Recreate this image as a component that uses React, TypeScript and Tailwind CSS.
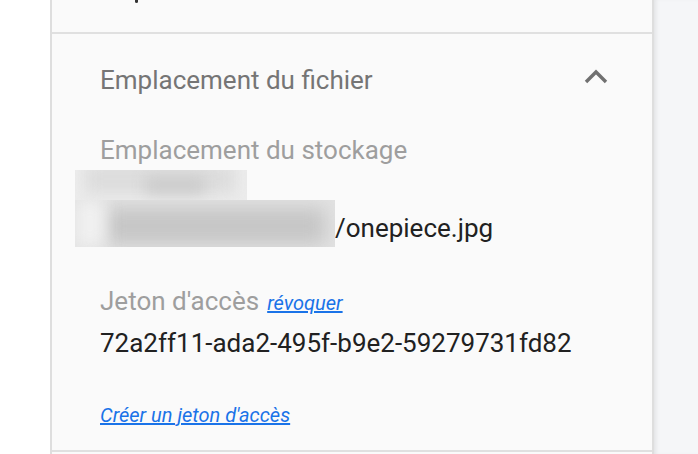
export default function App() {
  return (
    <div className="w-[698px] h-[454px] overflow-hidden flex bg-white" style={{ fontFamily: 'Roboto, "Liberation Sans", sans-serif' }}>
      {/* Left gutter */}
      <div className="w-[50px] shrink-0 bg-white" />

      {/* Panel */}
      <div className="w-[604px] shrink-0 bg-[#fafafa] border-x-2 border-[#dedede] flex flex-col">
        {/* Previous section tail */}
        <div className="h-[34px] shrink-0 relative border-b-2 border-[#e0e0e0]">
          <span className="absolute left-[83px] -top-[2px] w-[3px] h-[5px] bg-[#333] rounded-b-sm" />
        </div>

        {/* File location section */}
        <div className="flex-1 flex flex-col pl-[48px] pr-[44px] border-b-2 border-[#e0e0e0]">
          <div className="h-[92px] shrink-0 flex items-center justify-between">
            <span className="text-[26px] leading-[30px] text-[#757575]">Emplacement du fichier</span>
            <svg width="24" height="16" viewBox="0 0 24 16" className="mt-[-6px]">
              <polyline points="2,13 12,3 22,13" fill="none" stroke="#707070" strokeWidth="3.4" />
            </svg>
          </div>

          <div className="mt-[9px] text-[26px] leading-[30px] text-[#9e9e9e]">Emplacement du stockage</div>

          <div className="mt-[5px] h-[77px] flex items-end -ml-[25px]">
            {/* blurred path */}
            <div className="w-[260px] h-[77px] flex flex-col">
              <div className="w-[172px] h-[30px] relative overflow-hidden bg-[#ececec]">
                <div className="absolute left-[10px] top-[-6px] w-[150px] h-[30px] bg-[#dcdcdc] blur-[8px]" />
                <div className="absolute left-[70px] top-[6px] w-[60px] h-[18px] bg-[#cccccc] blur-[7px]" />
              </div>
              <div className="flex-1 relative overflow-hidden bg-[#e2e2e2]">
                <div className="absolute left-[30px] top-[8px] w-[220px] h-[36px] bg-[#c6c6c6] blur-[9px]" />
                <div className="absolute left-[0px] top-[0px] w-[30px] h-[47px] bg-[#f0f0f0] blur-[8px]" />
              </div>
            </div>
            <span className="text-[26px] leading-[30px] text-[#212121] pb-[4px]">/onepiece.jpg</span>
          </div>

          <div className="mt-[39px] flex items-baseline gap-[8px]">
            <span className="text-[26px] leading-[30px] text-[#9e9e9e]">Jeton d'accès</span>
            <a href="#" className="text-[20px] leading-[24px] italic text-[#1a73e8] underline">révoquer</a>
          </div>
          <div className="mt-[12px] text-[26px] leading-[30px] text-[#212121]">72a2ff11-ada2-495f-b9e2-59279731fd82</div>

          <a href="#" className="mt-[45px] text-[20px] leading-[24px] italic text-[#1a73e8] underline w-fit">Créer un jeton d'accès</a>
        </div>
        <div className="h-[2px] shrink-0" />
      </div>

      {/* Right area */}
      <div className="flex-1 bg-[#f5f6f8] shadow-[inset_4px_0_4px_-2px_rgba(0,0,0,0.08)]" />
    </div>
  );
}
